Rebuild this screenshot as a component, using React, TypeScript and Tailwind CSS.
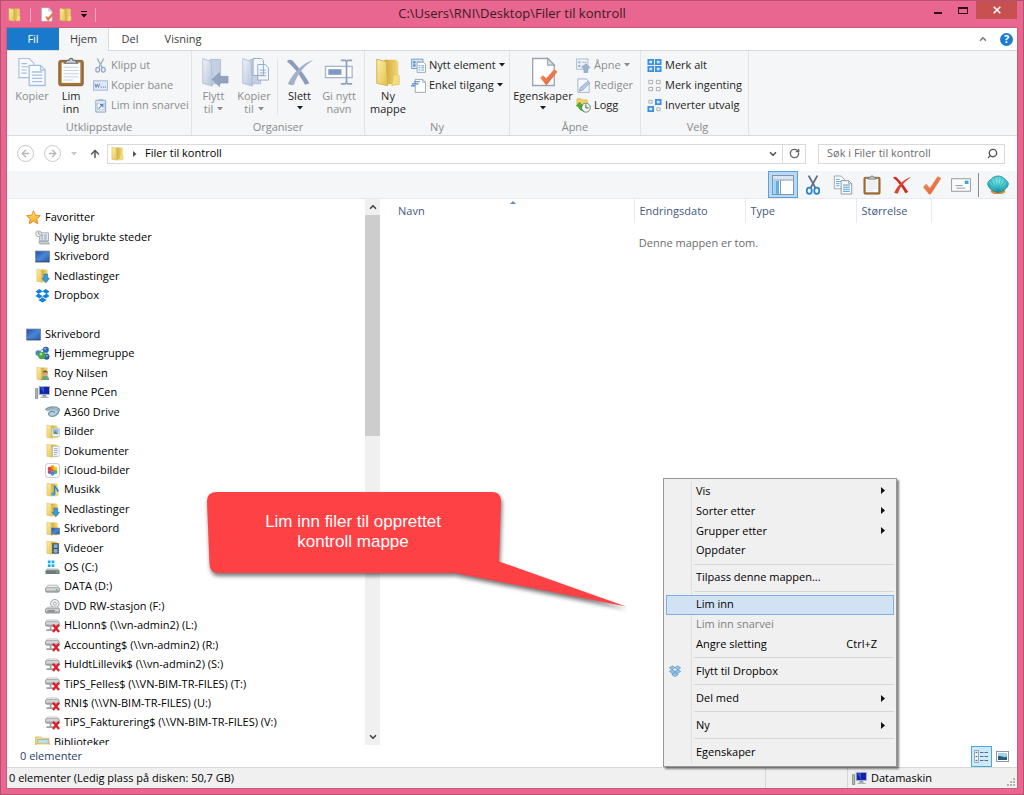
import React from "react";
import {
  ChevronDown,
  ChevronUp,
  RotateCw,
  ArrowUp,
  ArrowLeft,
  ArrowRight,
  Search,
} from "lucide-react";

type IconProps = { className?: string };
type IconType = React.FC<IconProps>;

/* ---------- shared gradients ---------- */

const Gradients = () => (
  <svg className="absolute h-0 w-0" aria-hidden="true">
    <defs>
      <linearGradient id="folderFront" x1="0" y1="0" x2="1" y2="1">
        <stop offset="0" stopColor="#fcf0ae" />
        <stop offset="1" stopColor="#e3c04a" />
      </linearGradient>
      <linearGradient id="folderBack" x1="0" y1="0" x2="1" y2="0">
        <stop offset="0" stopColor="#cfa737" />
        <stop offset="1" stopColor="#f1d977" />
      </linearGradient>
      <linearGradient id="fadedFront" x1="0" y1="0" x2="1" y2="1">
        <stop offset="0" stopColor="#eef2f8" />
        <stop offset="1" stopColor="#b5c3da" />
      </linearGradient>
      <linearGradient id="screenBlue" x1="0" y1="0" x2="1" y2="1">
        <stop offset="0" stopColor="#1f4fa8" />
        <stop offset="0.5" stopColor="#4a86d8" />
        <stop offset="1" stopColor="#2457ae" />
      </linearGradient>
      <linearGradient id="driveGrey" x1="0" y1="0" x2="0" y2="1">
        <stop offset="0" stopColor="#f4f4f4" />
        <stop offset="1" stopColor="#9da1a4" />
      </linearGradient>
      <linearGradient id="starGold" x1="0" y1="0" x2="0" y2="1">
        <stop offset="0" stopColor="#ffe873" />
        <stop offset="1" stopColor="#f7a51d" />
      </linearGradient>
      <linearGradient id="orangeTick" x1="0" y1="0" x2="1" y2="1">
        <stop offset="0" stopColor="#f79a6c" />
        <stop offset="1" stopColor="#e0562a" />
      </linearGradient>
      <radialGradient id="shellTeal" cx="0.5" cy="0.3" r="0.7">
        <stop offset="0" stopColor="#7ff0ea" />
        <stop offset="1" stopColor="#1a9fb0" />
      </radialGradient>
    </defs>
  </svg>
);

/* ---------- 16px icons ---------- */

const Svg16 = ({
  className = "h-4 w-4",
  children,
}: IconProps & { children: React.ReactNode }) => (
  <svg viewBox="0 0 16 16" className={`shrink-0 ${className}`} aria-hidden="true">
    {children}
  </svg>
);

const FolderShape = () => (
  <>
    <path d="M6 1.500h6l1.500 1v12H6z" fill="url(#folderBack)" />
    <path d="M11 9l3 1v4.500l-4 .8z" fill="#f4dd7d" stroke="#d9b94f" strokeWidth="0.3" />
    <path d="M2 1.200l5 1.300.8 12.800L2 14z" fill="url(#folderFront)" stroke="#d3b04a" strokeWidth="0.5" />
  </>
);

const FolderIcon: IconType = (p) => (
  <Svg16 {...p}>
    <FolderShape />
  </Svg16>
);

const StarIcon: IconType = (p) => (
  <Svg16 {...p}>
    <path d="M8 .8l2.1 4.8 5.2.5-3.9 3.4 1.2 5.2L8 12l-4.6 2.7 1.2-5.2L.7 6.100l5.200-.5z" fill="url(#starGold)" stroke="#df7d1c" strokeWidth="0.9" />
  </Svg16>
);

const RecentIcon: IconType = (p) => (
  <Svg16 {...p}>
    <path d="M5 3h9.500v8.500H5z" fill="#e4e9ee" stroke="#8b98a5" strokeWidth="0.8" />
    <path d="M6.500 5.500h2m1 0h3m-6 2h2m1 0h3m-6 2h2m1 0h3" stroke="#7a93ad" strokeWidth="0.9" />
    <path d="M4 12h9.500l2 3H5z" fill="#c3cad1" stroke="#8b98a5" strokeWidth="0.7" />
    <circle cx="3.800" cy="4" r="3" fill="#f5f5f5" stroke="#8b8b8b" strokeWidth="0.8" />
    <path d="M3.800 2.200V4l1.400.6" fill="none" stroke="#555" strokeWidth="0.7" />
  </Svg16>
);

const DesktopIcon: IconType = (p) => (
  <Svg16 {...p}>
    <rect x="0.700" y="2.200" width="14.800" height="11.800" fill="url(#screenBlue)" stroke="#6d7d92" strokeWidth="0.8" />
    <path d="M1 13.200h14" stroke="#3c4a5c" strokeWidth="0.8" />
  </Svg16>
);

const DownloadsIcon: IconType = (p) => (
  <Svg16 {...p}>
    <FolderShape />
    <path d="M9.500 6.500h4v4.500h2L11.500 15.700 7.500 11h2z" fill="#3d9bdc" stroke="#1f6ca8" strokeWidth="0.6" />
  </Svg16>
);

const DropboxShape = ({ fill = "#1081de", stroke = "none" }) => (
  <path
    d="M4.700 1L.5 3.700 3.500 6.100.5 8.500l4.200 2.700L8 8.700l3.300 2.500 4.200-2.700-3-2.400 3-2.400L11.300 1 8 3.500zM8 3.800l4 2.300-4 2.300-4-2.300zM4 11.700v1.300l4 2.500 4-2.500v-1.300l-.8.500L8 9.800l-3.200 2.400z"
    fill={fill}
    stroke={stroke}
    strokeWidth="0.6"
    fillRule="evenodd"
  />
);

const DropboxIcon: IconType = (p) => (
  <Svg16 {...p}>
    <DropboxShape />
  </Svg16>
);

const HomegroupIcon: IconType = (p) => (
  <Svg16 {...p}>
    <path d="M3 9l4-5 5-1 1 7-5 3z" fill="none" stroke="#6f9ed0" strokeWidth="1" />
    <circle cx="11.500" cy="4" r="3.300" fill="#2e68b8" />
    <circle cx="3.500" cy="7.500" r="3" fill="#4487cd" />
    <circle cx="12.300" cy="11.500" r="3.200" fill="#2a5cab" />
    <circle cx="7.300" cy="10" r="4" fill="#46a546" />
    <circle cx="6.300" cy="8.700" r="1.400" fill="#a7e295" />
    <circle cx="10.700" cy="3" r="1" fill="#9cc5ef" />
    <circle cx="12.700" cy="10.500" r="0.900" fill="#9cc5ef" />
  </Svg16>
);

const UserFolderIcon: IconType = (p) => (
  <Svg16 {...p}>
    <FolderShape />
    <path d="M7 15c0-3.500 1.500-4.500 3.700-4.500s4.300 1 4.300 4.500z" fill="#6aa87a" />
    <circle cx="11" cy="8" r="2.700" fill="#d7a77c" />
    <path d="M8.300 7.500c0-3.500 5.400-3.500 5.400 0l-1-.8H9.500z" fill="#5f5348" />
  </Svg16>
);

const ComputerIcon: IconType = (p) => (
  <Svg16 {...p}>
    <rect x="0.500" y="4" width="2.500" height="10.500" fill="#a5b8a0" stroke="#6b7a6b" strokeWidth="0.6" />
    <rect x="4.500" y="1.500" width="11" height="8.500" fill="#1422a8" stroke="#a9b3c2" />
    <path d="M5.500 2.500h4v6z" fill="#3b55e0" />
    <path d="M8.500 10.500h3l1 2h-5z" fill="#8e99a8" />
    <path d="M6 13.200h8.500" stroke="#aab3bf" strokeWidth="1.3" />
  </Svg16>
);

const A360Icon: IconType = (p) => (
  <Svg16 {...p}>
    <path d="M.5 6.500C3 3 11 1.500 15.500 5.500 14.500 12 9 14.500 5 12.500 3 11 3.600 8.700 6 8c2-.6 4.500 0 4 1.700" fill="#b9d0dc" stroke="#7598ab" strokeWidth="1.4" />
    <path d="M2 6.700c4-2.500 9-2.300 12 .3" stroke="#8fadbc" strokeWidth="1.6" fill="none" />
  </Svg16>
);

const PicturesIcon: IconType = (p) => (
  <Svg16 {...p}>
    <FolderShape />
    <rect x="7.500" y="4.500" width="8" height="9" fill="#eef3f7" stroke="#9fb0c0" strokeWidth="0.6" />
    <path d="M8.500 5.500h6v4h-6z" fill="#8dbbe0" />
    <path d="M8.500 10.500l2.500-3 3.500 3.500z" fill="#5c8f68" />
  </Svg16>
);

const DocumentsIcon: IconType = (p) => (
  <Svg16 {...p}>
    <FolderShape />
    <rect x="8" y="3.500" width="7" height="10.500" fill="#fafafa" stroke="#9fb0c0" strokeWidth="0.6" />
    <path d="M9.500 6h4m-4 2h4m-4 2h4m-4 2h3" stroke="#7b94b5" strokeWidth="0.8" />
  </Svg16>
);

const CloudPhotosIcon: IconType = (p) => (
  <Svg16 {...p}>
    <rect x="0.500" y="0.500" width="15" height="15" rx="3" fill="#fff" stroke="#b8b8b8" strokeWidth="0.8" />
    <circle cx="8" cy="4.600" r="2.200" fill="#f7941d" />
    <circle cx="11" cy="6.300" r="2.200" fill="#e5cf1b" />
    <circle cx="11" cy="9.600" r="2.200" fill="#48b15a" />
    <circle cx="8" cy="11.300" r="2.200" fill="#3c8fd4" />
    <circle cx="5" cy="9.600" r="2.200" fill="#8b59b0" />
    <circle cx="5" cy="6.300" r="2.200" fill="#e4413c" />
    <circle cx="8" cy="8" r="1.500" fill="#e84a2e" />
  </Svg16>
);

const MusicIcon: IconType = (p) => (
  <Svg16 {...p}>
    <FolderShape />
    <path d="M10 4c.8 2.500 4.500 2.600 3.500 6.500" fill="none" stroke="#2785cb" strokeWidth="1.7" />
    <path d="M10.200 4v8.500" stroke="#2785cb" strokeWidth="1.5" />
    <ellipse cx="9" cy="12.800" rx="2.300" ry="1.900" fill="#3f9ee0" />
  </Svg16>
);

const DesktopFolderIcon: IconType = (p) => (
  <Svg16 {...p}>
    <FolderShape />
    <rect x="7" y="7.500" width="8.500" height="6.500" fill="url(#screenBlue)" stroke="#5d6c80" strokeWidth="0.6" />
  </Svg16>
);

const VideosIcon: IconType = (p) => (
  <Svg16 {...p}>
    <FolderShape />
    <rect x="7.500" y="3.500" width="7.500" height="11" fill="#3b444d" />
    <path d="M9.300 4.500h4v4h-4zm0 5h4v4h-4z" fill="#7fb2dc" />
    <path d="M8.400 4v10.500M14.200 4v10.500" stroke="#cfd6db" strokeWidth="0.7" strokeDasharray="1 1" />
  </Svg16>
);

const OsDriveIcon: IconType = (p) => (
  <Svg16 {...p}>
    <path d="M3 .5h3v3H3zm4 0h3v3H7zM3 4.500h3v3H3zm4 0h3v3H7z" fill="#15b2e8" />
    <path d="M2 9h12l1.500 2.500H.5z" fill="#b9bec1" />
    <rect x="0.500" y="11" width="15" height="4" rx="1" fill="#6f7a80" />
    <rect x="11.500" y="12.300" width="2.500" height="1.200" fill="#5be06b" />
  </Svg16>
);

const DriveIcon: IconType = (p) => (
  <Svg16 {...p}>
    <path d="M3 6.500h10l2.500 3.500H.5z" fill="#e6e8e9" stroke="#9a9ea1" strokeWidth="0.6" />
    <rect x="0.500" y="9.500" width="15" height="4.500" rx="1.500" fill="url(#driveGrey)" stroke="#777c80" strokeWidth="0.7" />
    <rect x="11.500" y="11" width="2" height="1.300" fill="#4fae55" />
  </Svg16>
);

const DvdIcon: IconType = (p) => (
  <Svg16 {...p}>
    <circle cx="10.500" cy="5" r="4.500" fill="#edf0f2" stroke="#85898c" strokeWidth="0.8" />
    <circle cx="10.500" cy="5" r="1.600" fill="#fff" stroke="#85898c" strokeWidth="0.7" />
    <path d="M3 8.500h11l1.500 2.500H.5z" fill="#d9dcde" stroke="#8d9194" strokeWidth="0.5" />
    <rect x="0.500" y="10.500" width="15" height="4.500" rx="1" fill="url(#driveGrey)" stroke="#6d7275" strokeWidth="0.7" />
    <path d="M2.500 12.700h8" stroke="#53585b" />
  </Svg16>
);

const NetworkDriveIcon: IconType = (p) => (
  <Svg16 {...p}>
    <path d="M2.500 2h10.500l2 2.500H.7z" fill="#eceeef" stroke="#9a9ea1" strokeWidth="0.5" />
    <rect x="0.500" y="4" width="14.700" height="4.700" rx="1.500" fill="url(#driveGrey)" stroke="#777c80" strokeWidth="0.7" />
    <path d="M6 8.500v4M1.500 13h8" stroke="#9ba1a5" strokeWidth="1.8" />
    <path d="M8.500 7.300l6.500 7.700M15 7.300L8.500 15" stroke="#de1f29" strokeWidth="2.500" />
  </Svg16>
);

const LibrariesIcon: IconType = (p) => (
  <Svg16 {...p}>
    <path d="M.5 2h6l1 1.500H15v10.500H.5z" fill="#f1dc83" stroke="#c9a945" strokeWidth="0.6" />
    <rect x="3" y="5" width="11" height="6" fill="#bcdff0" stroke="#6fa8c5" strokeWidth="0.6" />
    <path d="M1 9h14.500v6H1z" fill="#f7e9a6" stroke="#c9a945" strokeWidth="0.6" />
  </Svg16>
);

const PropertiesShape = () => (
  <>
    <path d="M2.500.8h8L14 4.300v10.900H2.500z" fill="#fff" stroke="#9aa4ae" strokeWidth="0.7" />
    <path d="M10.500.8v3.500H14z" fill="#dfe5ea" stroke="#9aa4ae" strokeWidth="0.6" />
    <path d="M6.500 11l1.500-1.300 1.700 1.600L14 6.500l1.700 1.300-5.900 7.400z" fill="url(#orangeTick)" />
  </>
);

const PropertiesIcon: IconType = (p) => (
  <Svg16 {...p}>
    <PropertiesShape />
  </Svg16>
);

const PagesShape = ({ edge = "#a9bfdd", lines = "#a9bfdd" }) => (
  <>
    <path d="M1 .8h5.500L9 3.300V11H1z" fill="#f7fafe" stroke={edge} strokeWidth="0.6" />
    <path d="M2.300 3.500h3m-3 1.700h4m-4 1.700h3m-3 1.700h3" stroke={lines} strokeWidth="0.6" />
    <path d="M6.500 4.500h6L15 7v8.200H6.500z" fill="#f7fafe" stroke={edge} strokeWidth="0.7" />
    <path d="M12.500 4.500V7H15" fill="none" stroke={edge} strokeWidth="0.6" />
    <path d="M8 8h5.500M8 9.700h5.500M8 11.400h5.500M8 13.100h5.500" stroke={lines} strokeWidth="0.7" />
  </>
);

const ClipboardShape = () => (
  <>
    <rect x="1.500" y="1.800" width="13" height="13.500" rx="1" fill="#a47338" stroke="#80592a" strokeWidth="0.5" />
    <rect x="3" y="3" width="10" height="10.800" fill="#fbfcfd" />
    <path d="M4 5.500h8M4 7.200h8M4 8.900h8M4 10.600h8M4 12.300h5" stroke="#c5d2e0" strokeWidth="0.5" />
    <path d="M4.500 3.300l1.500-1.600h1a1 1 0 0 1 2 0h1l1.500 1.600z" fill="#c9ced3" stroke="#656c73" strokeWidth="0.6" />
  </>
);

const ScissorsShape = ({ blade, handle }: { blade: string; handle: string }) => (
  <>
    <path d="M4.500.5l5.500 10M11.500.5L6 10.500" stroke={blade} strokeWidth="1.5" fill="none" />
    <ellipse cx="5" cy="12.500" rx="2" ry="2.500" fill="none" stroke={handle} strokeWidth="1.4" />
    <ellipse cx="11" cy="12.500" rx="2" ry="2.500" fill="none" stroke={handle} strokeWidth="1.4" />
  </>
);

const CutFadedIcon: IconType = (p) => (
  <Svg16 {...p}>
    <ScissorsShape blade="#a3afc2" handle="#94a8c8" />
  </Svg16>
);

const CopyPathIcon: IconType = (p) => (
  <Svg16 {...p}>
    <rect x="0.500" y="3" width="15" height="10" fill="#dfe8f4" stroke="#9db2d0" strokeWidth="0.9" />
    <path d="M2 6l1.200 4L4.500 6.500 5.800 10 7 6" fill="none" stroke="#5d7eae" strokeWidth="0.9" />
    <path d="M8 9.700h1.500m1 0H12m1 0h1" stroke="#5d7eae" />
  </Svg16>
);

const PasteShortcutIcon: IconType = (p) => (
  <Svg16 {...p}>
    <path d="M3 2.500h10.500v12.500H3z" fill="#e3ebf5" stroke="#89a0c4" />
    <path d="M6 1.200h4.500v2H6z" fill="#9db1d0" />
    <rect x="4.800" y="5.500" width="7" height="7" fill="#fff" stroke="#9db2d0" strokeWidth="0.6" />
    <path d="M6 11.300l4-4M7.300 7h3.200v3.200" stroke="#5d82bb" strokeWidth="1.2" fill="none" />
  </Svg16>
);

const NewItemIcon: IconType = (p) => (
  <Svg16 {...p}>
    <rect x="0.700" y="1.200" width="12" height="10" fill="#dcebf8" stroke="#6793bd" strokeWidth="0.9" />
    <path d="M2.500 3.500h2v2h-2zm0 3.500h2v2h-2zM6 4h5" fill="#5d91c7" stroke="#5d91c7" strokeWidth="0.6" />
    <path d="M6.500 4.500h7l2 2v8.800h-9z" fill="#fff" stroke="#7e92a8" strokeWidth="0.8" />
    <path d="M8 8.200h2m1 0h3m-6 2.300h2m1 0h3m-6 2.300h2m1 0h3" stroke="#6e9bc5" strokeWidth="1.1" />
  </Svg16>
);

const EasyAccessIcon: IconType = (p) => (
  <Svg16 {...p}>
    <path d="M4.500 1.500h8l3 3v10.800h-11z" fill="#fff" stroke="#7e92a8" strokeWidth="0.8" />
    <path d="M12.500 1.500v3h3" fill="none" stroke="#7e92a8" strokeWidth="0.7" />
    <path d="M3 4h6.500M1 6.200h7M0 8.400h4.500" stroke="#4a86c8" strokeWidth="1.2" />
  </Svg16>
);

const OpenIcon: IconType = (p) => (
  <Svg16 {...p}>
    <rect x="0.700" y="1" width="12" height="11" fill="#eef3fa" stroke="#a4b4cb" strokeWidth="0.9" />
    <path d="M2.500 3.500h2v2h-2zm0 4h2v2h-2z" fill="#89a7d0" />
    <path d="M6 4.500h5M6 8.500h2" stroke="#a4b4cb" />
    <path d="M10.500 6l4.500 4.500h-2.500v5h-4v-5H6z" fill="#9eb4d1" stroke="#7c94b8" strokeWidth="0.6" />
  </Svg16>
);

const EditIcon: IconType = (p) => (
  <Svg16 {...p}>
    <path d="M2 1h9l3 3v11.300H2z" fill="#f4f8fd" stroke="#94a8c5" strokeWidth="0.9" />
    <path d="M3.500 14l1-3.500 8-7 2 2-7.500 7.500z" fill="#b9cbe4" stroke="#7e9ac2" strokeWidth="0.8" />
  </Svg16>
);

const HistoryIcon: IconType = (p) => (
  <Svg16 {...p}>
    <path d="M1 .8h4.500l1 1.200H12v7H1z" fill="#f2d561" stroke="#c8a537" strokeWidth="0.6" />
    <circle cx="10.500" cy="10.300" r="4.800" fill="#eef7f0" stroke="#65736a" strokeWidth="0.9" />
    <path d="M10.500 6.800v3.800h3" fill="none" stroke="#4a5a52" />
    <path d="M.5 8.500l3.300-4 3.500 4H5.500c0 2.500 1 4 2.500 5.500-3-.5-5.200-2.500-5.500-5.500z" fill="#46b13c" stroke="#23801e" strokeWidth="0.5" />
  </Svg16>
);

const SelectAllIcon: IconType = (p) => (
  <Svg16 {...p}>
    <path d="M.5 1h7v6.500h-7zm8 0h7v6.500h-7zm-8 7.500h7V15h-7zm8 0h7V15h-7z" fill="#3c8fe4" />
    <path d="M2.500 3h3v2.500h-3zm8 0h3v2.500h-3zm-8 7.500h3V13h-3zm8 0h3V13h-3z" fill="#d7eafb" />
  </Svg16>
);

const SelectNoneIcon: IconType = (p) => (
  <Svg16 {...p}>
    <path d="M2 2.500h4v3.500H2zm8 0h4v3.500h-4zM2 10h4v3.500H2zm8 0h4v3.500h-4z" fill="#fff" stroke="#9b9b9b" strokeWidth="0.9" />
  </Svg16>
);

const InvertIcon: IconType = (p) => (
  <Svg16 {...p}>
    <path d="M8.500 1h7v6.500h-7zm-8 7.500h7V15h-7z" fill="#3c8fe4" />
    <path d="M10.500 3h3v2.500h-3zm-8 7.500h3V13h-3z" fill="#d7eafb" />
    <path d="M2 2.500h3.500v3H2zm8.500 8H14v3h-3.500z" fill="#fff" stroke="#9b9b9b" strokeWidth="0.9" />
  </Svg16>
);

/* ---------- large ribbon icons ---------- */

const Svg32 = ({ children }: { children: React.ReactNode }) => (
  <svg viewBox="0 0 16 16" className="h-[30px] w-[30px] shrink-0" aria-hidden="true">
    {children}
  </svg>
);

const FadedFolder = () => (
  <>
    <path d="M6 1.300h5.500v13H6z" fill="#c3cfe2" stroke="#a9b8d0" strokeWidth="0.4" />
    <path d="M2 .8l4.300 1.500.9 13.200L2 14z" fill="url(#fadedFront)" stroke="#a9b8d0" strokeWidth="0.4" />
  </>
);

const BigCopy = () => (
  <Svg32>
    <PagesShape />
  </Svg32>
);
const BigPaste = () => (
  <Svg32>
    <ClipboardShape />
  </Svg32>
);
const BigMoveTo = () => (
  <Svg32>
    <FadedFolder />
    <path d="M7 12l4-3.700v2h4.500v3.600H11v2z" fill="#93a4bf" stroke="#7c8fae" strokeWidth="0.3" />
  </Svg32>
);
const BigCopyTo = () => (
  <Svg32>
    <FadedFolder />
    <path d="M7.500.8h4.500l1 1v8H7.500zM10 4h4l1.700 1.700v6.600H10z" fill="#f4f8fd" stroke="#92a8c8" strokeWidth="0.5" />
    <path d="M11 7h3.500M11 8.500h3.500M11 10h3.500" stroke="#92a8c8" strokeWidth="0.5" />
  </Svg32>
);
const BigDelete = () => (
  <Svg32>
    <path d="M1 2.200c1-1 2.500-.9 3.300.1 3.500 4 6 7 8.700 11.700l-2.300.8C8.500 10.500 5 5.500 1 2.200z" fill="#8b9db8" />
    <path d="M15.300 1.500C10.500 4.500 6.500 9 4.800 14.800c-1.200.4-2.300.2-3.300-.5C4 9 9.500 3 15.300 1.500z" fill="#a2b2ca" />
  </Svg32>
);
const BigRename = () => (
  <Svg32>
    <rect x="0.800" y="5" width="14.200" height="6" fill="#fff" stroke="#a7b6cc" strokeWidth="0.7" />
    <rect x="2.300" y="6.500" width="7" height="3" fill="#7e9ac4" />
    <path d="M9 1.800h2.300l.7.600.7-.6H15M12 2.300v11.400M9 14.300h2.300l.7-.6.7.6H15" fill="none" stroke="#8da0be" strokeWidth="0.9" />
  </Svg32>
);
const BigFolder = () => (
  <Svg32>
    <FolderShape />
  </Svg32>
);
const BigProperties = () => (
  <Svg32>
    <PropertiesShape />
  </Svg32>
);

/* ---------- ribbon ---------- */

const Caret = ({ className = "" }: IconProps) => (
  <svg viewBox="0 0 6 4" className={`h-1 w-1.5 shrink-0 fill-current ${className}`} aria-hidden="true">
    <path d="M0 0h6L3 3.500z" />
  </svg>
);

type BigButtonProps = {
  icon: React.ReactNode;
  lines: string[];
  caret?: "inline" | "below";
  disabled?: boolean;
  className: string;
};

const BigButton = ({ icon, lines, caret, disabled, className }: BigButtonProps) => (
  <button
    type="button"
    disabled={disabled}
    className={`flex flex-col items-center pt-1.5 leading-[13px] ${disabled ? "text-[#8d8d8d]" : "text-[#1e1e1e]"} ${className}`}
  >
    {icon}
    <span className="mt-0.5 whitespace-nowrap">{lines[0]}</span>
    {lines[1] && (
      <span className="flex items-center gap-1 whitespace-nowrap">
        {lines[1]}
        {caret === "inline" && <Caret />}
      </span>
    )}
    {caret === "below" && <Caret className="mt-1" />}
  </button>
);

type SmallButtonProps = {
  Icon: IconType;
  label: string;
  caret?: boolean;
  disabled?: boolean;
};

const SmallButton = ({ Icon, label, caret, disabled }: SmallButtonProps) => (
  <button
    type="button"
    disabled={disabled}
    className={`flex h-5 items-center gap-[3px] whitespace-nowrap ${disabled ? "text-[#8d8d8d]" : "text-[#1e1e1e]"}`}
  >
    <Icon className="h-[15px] w-[15px]" />
    {label}
    {caret && <Caret />}
  </button>
);

const Group = ({
  label,
  className,
  children,
}: {
  label: string;
  className: string;
  children: React.ReactNode;
}) => (
  <section className={`flex shrink-0 flex-col border-r border-[#e2e3e4] ${className}`}>
    <div className="flex flex-1">{children}</div>
    <h2 className="text-center leading-4 text-[#8a8a8a]">{label}</h2>
  </section>
);

const SmallStack = ({ children }: { children: React.ReactNode }) => (
  <div className="flex flex-col pt-1">{children}</div>
);

const Ribbon = () => (
  <div className="flex h-[85px] shrink-0 overflow-hidden border-b border-[#d9dadb] bg-[#f5f6f7]">
    <Group label="Utklippstavle" className="w-[185px]">
      <BigButton icon={<BigCopy />} lines={["Kopier"]} disabled className="w-[50px]" />
      <BigButton icon={<BigPaste />} lines={["Lim", "inn"]} className="mr-2 w-[28px]" />
      <SmallStack>
        <SmallButton Icon={CutFadedIcon} label="Klipp ut" disabled />
        <SmallButton Icon={CopyPathIcon} label="Kopier bane" disabled />
        <SmallButton Icon={PasteShortcutIcon} label="Lim inn snarvei" disabled />
      </SmallStack>
    </Group>
    <Group label="Organiser" className="w-[173px]">
      <BigButton icon={<BigMoveTo />} lines={["Flytt", "til"]} caret="inline" disabled className="w-[43px]" />
      <BigButton icon={<BigCopyTo />} lines={["Kopier", "til"]} caret="inline" disabled className="w-[38px]" />
      <div className="mt-2 mb-1 ml-1 w-px bg-[#e2e3e4]" />
      <BigButton icon={<BigDelete />} lines={["Slett"]} caret="below" className="w-[43px]" />
      <BigButton icon={<BigRename />} lines={["Gi nytt", "navn"]} disabled className="w-[36px]" />
    </Group>
    <Group label="Ny" className="w-[145px]">
      <BigButton icon={<BigFolder />} lines={["Ny", "mappe"]} className="w-[46px]" />
      <SmallStack>
        <SmallButton Icon={NewItemIcon} label="Nytt element" caret />
        <SmallButton Icon={EasyAccessIcon} label="Enkel tilgang" caret />
      </SmallStack>
    </Group>
    <Group label="Åpne" className="w-[131px]">
      <BigButton icon={<BigProperties />} lines={["Egenskaper"]} caret="below" className="w-[66px]" />
      <SmallStack>
        <SmallButton Icon={OpenIcon} label="Åpne" caret disabled />
        <SmallButton Icon={EditIcon} label="Rediger" disabled />
        <SmallButton Icon={HistoryIcon} label="Logg" />
      </SmallStack>
    </Group>
    <Group label="Velg" className="w-[108px] pl-1.5">
      <SmallStack>
        <SmallButton Icon={SelectAllIcon} label="Merk alt" />
        <SmallButton Icon={SelectNoneIcon} label="Merk ingenting" />
        <SmallButton Icon={InvertIcon} label="Inverter utvalg" />
      </SmallStack>
    </Group>
  </div>
);

/* ---------- title, tabs, address, toolbar ---------- */

const TitleBar = () => (
  <header className="relative flex h-[26px] shrink-0 items-center justify-center">
    <div className="absolute top-1.5 left-px flex items-center">
      <FolderIcon className="h-[15px] w-[15px]" />
      <span className="ml-2 h-3.5 w-px bg-[#f3a9c0]" />
      <button type="button" aria-label="Egenskaper" className="ml-2">
        <PropertiesIcon className="h-[15px] w-[15px]" />
      </button>
      <button type="button" aria-label="Ny mappe" className="ml-1">
        <FolderIcon className="h-[15px] w-[15px]" />
      </button>
      <button type="button" aria-label="Tilpass" className="ml-2 flex flex-col items-center gap-0.5 text-black">
        <span className="h-px w-1.5 bg-black" />
        <Caret />
      </button>
      <span className="ml-2 h-3.5 w-px bg-[#f3a9c0]" />
    </div>
    <h1 className="text-[13px] text-[#3c1a26]">C:\Users\RNI\Desktop\Filer til kontroll</h1>
    <div className="absolute top-0 right-px flex h-[18px] items-center">
      <button type="button" aria-label="Minimer" className="flex h-full w-[25px] items-center justify-center pt-1.5">
        <span className="h-0.5 w-2 bg-[#2c0f1a]" />
      </button>
      <button type="button" aria-label="Maksimer" className="flex h-full w-[26px] items-center justify-center">
        <span className="h-[7px] w-[10px] border border-t-2 border-[#2c0f1a]" />
      </button>
      <button type="button" aria-label="Lukk" className="flex h-full w-[41px] items-center justify-center bg-[#c75050]">
        <svg viewBox="0 0 8 8" className="h-2 w-2" aria-hidden="true">
          <path d="M.7.7l6.600 6.600M7.300.7L.7 7.300" stroke="#fff" strokeWidth="1.6" />
        </svg>
      </button>
    </div>
  </header>
);

const Tabs = () => (
  <nav className="flex h-[23px] shrink-0 items-stretch border-b border-[#d9dadb] bg-white text-[#3b3b3b]">
    <button type="button" className="w-[52px] bg-[#1979ca] text-white">Fil</button>
    <button type="button" className="-mb-px w-[50px] border-r border-[#d9dadb] bg-[#f5f6f7]">Hjem</button>
    <button type="button" className="w-[42px]">Del</button>
    <button type="button" className="w-[64px]">Visning</button>
    <div className="ml-auto flex items-center gap-3 pr-1">
      <button type="button" aria-label="Minimer båndet">
        <ChevronUp className="h-2.5 w-2.5 text-[#7d7d7d]" strokeWidth={4} />
      </button>
      <button type="button" aria-label="Hjelp" className="flex h-[13px] w-[13px] items-center justify-center rounded-full bg-[#1f7bd0] font-bold text-white">
        ?
      </button>
    </div>
  </nav>
);

const AddressBar = () => (
  <div className="flex h-[35px] shrink-0 items-center bg-white pr-3 pl-2.5">
    <button type="button" aria-label="Tilbake" className="flex h-[17px] w-[17px] items-center justify-center rounded-full border border-[#c8c8c8] text-[#b9b9b9]">
      <ArrowLeft className="h-[11px] w-[11px]" strokeWidth={3} />
    </button>
    <button type="button" aria-label="Fremover" className="ml-2.5 flex h-[17px] w-[17px] items-center justify-center rounded-full border border-[#c8c8c8] text-[#b9b9b9]">
      <ArrowRight className="h-[11px] w-[11px]" strokeWidth={3} />
    </button>
    <button type="button" aria-label="Nylige plasseringer" className="ml-2.5 text-[#c8c8c8]">
      <Caret />
    </button>
    <button type="button" aria-label="Opp" className="mr-1.5 ml-3 text-[#555]">
      <ArrowUp className="h-3 w-3" strokeWidth={3} />
    </button>
    <div className="flex h-5 flex-1 items-center border border-[#d9d9d9] pl-0.5">
      <FolderIcon className="h-[15px] w-[15px]" />
      <svg viewBox="0 0 4 6" className="ml-2 h-1.5 w-1" aria-hidden="true">
        <path d="M0 0l3.500 3L0 6z" fill="#555" />
      </svg>
      <span className="ml-2 flex-1 text-black">Filer til kontroll</span>
      <button type="button" aria-label="Tidligere plasseringer" className="flex w-[18px] justify-center text-[#555]">
        <ChevronDown className="h-2.5 w-2.5" strokeWidth={4} />
      </button>
      <button type="button" aria-label="Oppdater" className="flex h-full w-[23px] items-center justify-center border-l border-[#d9d9d9] text-[#666]">
        <RotateCw className="h-[11px] w-[11px]" strokeWidth={3} />
      </button>
    </div>
    <label className="ml-3 flex h-5 w-[187px] items-center border border-[#d9d9d9] pr-1.5 pl-2">
      <input
        type="text"
        aria-label="Søk"
        placeholder="Søk i Filer til kontroll"
        className="min-w-0 flex-1 bg-transparent outline-none placeholder:text-[#6d6d6d]"
      />
      <Search className="h-[11px] w-[11px] -scale-x-100 text-[#555]" strokeWidth={3} />
    </label>
  </div>
);

const tools: { label: string; art: React.ReactNode }[] = [
  { label: "Klipp ut", art: <ScissorsShape blade="#5c7187" handle="#2585cf" /> },
  { label: "Kopier", art: <PagesShape edge="#8d8d8d" lines="#3a93dc" /> },
  { label: "Lim inn", art: <ClipboardShape /> },
  {
    label: "Slett",
    art: (
      <>
        <path d="M.8 2c1-.9 2.300-.8 3 0 3.500 3.700 6 6.500 9.200 11.500l-2.300 1C8.500 10.500 5 5.300.8 2z" fill="#d0291f" />
        <path d="M15.500 1.500C10.500 4.500 6.500 9 4.800 14.500c-1.200.4-2 .2-3-.5C4 9 9.500 2.700 15.500 1.500z" fill="#e0402f" />
      </>
    ),
  },
  {
    label: "Egenskaper",
    art: <path d="M.8 9.500L3.300 7l3 3.300L12.500 1l2.800 1.500L7 15.300H5.500z" fill="url(#orangeTick)" />,
  },
  {
    label: "E-post",
    art: (
      <>
        <rect x="0.500" y="3" width="15" height="10" fill="#fbfbfb" stroke="#8f8f8f" strokeWidth="0.7" />
        <rect x="11" y="4.500" width="3" height="2.700" fill="#3ba9cf" />
        <path d="M3.500 8.500h6M4.500 10.500h7" stroke="#8a9299" strokeWidth="0.7" />
      </>
    ),
  },
];

const Toolbar = () => (
  <div className="flex h-[28px] shrink-0 items-center justify-end border-b border-[#e9eaeb] bg-[#f5f6f7] pr-[5px]">
    <button type="button" aria-label="Navigasjonsrute" className="flex h-[27px] w-[30px] items-center justify-center border border-[#5aa0e0] bg-[#b8d8f6]">
      <svg viewBox="0 0 22 20" className="h-5 w-[22px]" aria-hidden="true">
        <rect x="0.500" y="0.500" width="21" height="19" fill="#fff" stroke="#7f97ad" />
        <path d="M1 1h20v3.500H1z" fill="#d9e6f2" />
        <path d="M1 5h20M8.500 5v14.500" stroke="#7f97ad" />
        <path d="M1.500 6H7v13H1.500z" fill="#5eaeea" />
        <path d="M3 6v13" stroke="#a4d2f5" strokeWidth="2" />
      </svg>
    </button>
    <div className="flex w-[178px]">
      {tools.map((tool) => (
        <button key={tool.label} type="button" aria-label={tool.label} className="flex flex-1 justify-center">
          <Svg16 className="h-5 w-5">{tool.art}</Svg16>
        </button>
      ))}
    </div>
    <span className="mr-1 ml-0.5 h-6 w-px bg-[#8c8c8c]" />
    <button type="button" aria-label="Classic Shell" className="flex w-[29px] justify-center">
      <svg viewBox="0 0 22 20" className="h-5 w-[22px]" aria-hidden="true">
        <path d="M5 14l-1.500 3L7 19h8l3.500-2L17 14z" fill="#d98b3e" />
        <path d="M11 17.500C7 17 .8 13.500.6 8.500 1.500 6 3 5 4 4.200 6 2 8.500 1 11 1s5 1 7 3.200c1 .8 2.500 1.800 3.400 4.300-.2 5-6.400 8.500-10.400 9z" fill="url(#shellTeal)" stroke="#127e90" strokeWidth="0.7" />
        <path d="M11 17L11 1.500M11 17L7 2M11 17L15 2M11 17L3.500 5M11 17l7.500-12M11 17L1.500 9M11 17l9.500-8" stroke="#15899a" strokeWidth="0.4" />
      </svg>
    </button>
  </div>
);

/* ---------- navigation pane ---------- */

type TreeItem = { label: string; depth: 0 | 1 | 2; Icon: IconType } | null;

const tree: TreeItem[] = [
  { label: "Favoritter", depth: 0, Icon: StarIcon },
  { label: "Nylig brukte steder", depth: 1, Icon: RecentIcon },
  { label: "Skrivebord", depth: 1, Icon: DesktopIcon },
  { label: "Nedlastinger", depth: 1, Icon: DownloadsIcon },
  { label: "Dropbox", depth: 1, Icon: DropboxIcon },
  null,
  { label: "Skrivebord", depth: 0, Icon: DesktopIcon },
  { label: "Hjemmegruppe", depth: 1, Icon: HomegroupIcon },
  { label: "Roy Nilsen", depth: 1, Icon: UserFolderIcon },
  { label: "Denne PCen", depth: 1, Icon: ComputerIcon },
  { label: "A360 Drive", depth: 2, Icon: A360Icon },
  { label: "Bilder", depth: 2, Icon: PicturesIcon },
  { label: "Dokumenter", depth: 2, Icon: DocumentsIcon },
  { label: "iCloud-bilder", depth: 2, Icon: CloudPhotosIcon },
  { label: "Musikk", depth: 2, Icon: MusicIcon },
  { label: "Nedlastinger", depth: 2, Icon: DownloadsIcon },
  { label: "Skrivebord", depth: 2, Icon: DesktopFolderIcon },
  { label: "Videoer", depth: 2, Icon: VideosIcon },
  { label: "OS (C:)", depth: 2, Icon: OsDriveIcon },
  { label: "DATA (D:)", depth: 2, Icon: DriveIcon },
  { label: "DVD RW-stasjon (F:)", depth: 2, Icon: DvdIcon },
  { label: "HLlonn$ (\\\\vn-admin2) (L:)", depth: 2, Icon: NetworkDriveIcon },
  { label: "Accounting$ (\\\\vn-admin2) (R:)", depth: 2, Icon: NetworkDriveIcon },
  { label: "HuldtLillevik$ (\\\\vn-admin2) (S:)", depth: 2, Icon: NetworkDriveIcon },
  { label: "TiPS_Felles$ (\\\\VN-BIM-TR-FILES) (T:)", depth: 2, Icon: NetworkDriveIcon },
  { label: "RNI$ (\\\\VN-BIM-TR-FILES) (U:)", depth: 2, Icon: NetworkDriveIcon },
  { label: "TiPS_Fakturering$ (\\\\VN-BIM-TR-FILES) (V:)", depth: 2, Icon: NetworkDriveIcon },
  { label: "Biblioteker", depth: 1, Icon: LibrariesIcon },
];

const indents = ["pl-[19px]", "pl-7", "pl-[38px]"];

const NavigationPane = () => (
  <div className="flex w-[373px] shrink-0 overflow-hidden">
    <ul className="flex h-[calc(100%+7px)] flex-1 flex-col pt-[9px]">
      {tree.map((item, i) => (
        <li key={i} className="flex min-h-[19px] flex-1 items-center">
          {item && (
            <a href="#" className={`flex items-center gap-1 whitespace-nowrap text-black ${indents[item.depth]}`}>
              <item.Icon className="h-[15px] w-[15px]" />
              {item.label}
            </a>
          )}
        </li>
      ))}
    </ul>
    <div className="flex w-[15px] flex-col items-center bg-[#f0f0f0]">
      <button type="button" aria-label="Rull opp" className="flex h-4 items-center">
        <ChevronUp className="h-2.5 w-2.5 text-[#444]" strokeWidth={4} />
      </button>
      <div className="h-[221px] w-full bg-[#cdcdcd]" />
      <button type="button" aria-label="Rull ned" className="mt-auto flex h-4 items-center">
        <ChevronDown className="h-2.5 w-2.5 text-[#444]" strokeWidth={4} />
      </button>
    </div>
  </div>
);

/* ---------- file list ---------- */

const FileList = () => (
  <div className="min-w-0 flex-1">
    <table className="w-full table-fixed border-collapse">
      <thead>
        <tr className="h-6 text-left text-[#44597e]">
          <th className="relative w-[254px] pl-[18px] font-normal">
            Navn
            <svg viewBox="0 0 6 3" className="absolute top-0.5 left-[130px] h-[3px] w-1.5" aria-hidden="true">
              <path d="M0 3l3-3 3 3z" fill="#5c8fc0" />
            </svg>
          </th>
          <th className="w-[111px] border-x border-[#e5ebf3] pl-[5px] font-normal">Endringsdato</th>
          <th className="w-[111px] border-r border-[#e5ebf3] pl-[5px] font-normal">Type</th>
          <th className="w-[75px] border-r border-[#e5ebf3] pl-[5px] font-normal">Størrelse</th>
          <td />
        </tr>
      </thead>
      <tbody>
        <tr>
          <td colSpan={5} className="pt-3 text-center text-[#6d6d6d]">Denne mappen er tom.</td>
        </tr>
      </tbody>
    </table>
  </div>
);

/* ---------- status ---------- */

const DetailsBar = () => (
  <div className="flex h-[22px] shrink-0 items-center bg-white pr-2 pl-[13px] text-[#26406e]">
    0 elementer
    <button type="button" aria-label="Detaljer" className="ml-auto flex h-[21px] w-[21px] items-center justify-center border border-[#4aa7d8] bg-[#cdeafa]">
      <svg viewBox="0 0 15 13" className="h-[13px] w-[15px]" aria-hidden="true">
        <path d="M.5.5h4v12h-4z" fill="#fff" stroke="#7b8a96" strokeWidth="0.7" />
        <path d="M1.500 2.500h2m-2 4h2m-2 4h2" stroke="#4f7fa5" strokeWidth="1.3" />
        <path d="M6 2.500h3.500m1 0H14M6 6.500h3.500m1 0H14M6 10.500h3.500m1 0H14" stroke="#5d6f7d" strokeWidth="1.2" />
      </svg>
    </button>
    <button type="button" aria-label="Store ikoner" className="ml-1">
      <svg viewBox="0 0 13 11" className="h-[11px] w-[13px]" aria-hidden="true">
        <rect x="0.500" y="0.500" width="12" height="10" fill="#fff" stroke="#8d9aa5" />
        <path d="M2 2h9v7H2z" fill="#9ed3ef" />
        <path d="M2 5.500c3-1.500 5 2 9 0V9H2z" fill="#2c5a74" />
      </svg>
    </button>
  </div>
);

const StatusBar = () => (
  <footer className="flex h-[21px] shrink-0 items-stretch border-t border-[#d7d7d7] bg-[#f0f0f0] text-black">
    <span className="flex flex-1 items-center pl-0.5">0 elementer (Ledig plass på disken: 50,7 GB)</span>
    <span className="w-[82px] border-l border-[#d7d7d7]" />
    <span className="flex w-[170px] items-center gap-1 border-l border-[#d7d7d7] pl-1">
      <ComputerIcon className="h-[15px] w-[15px]" />
      Datamaskin
      <svg viewBox="0 0 8 8" className="mt-auto mr-0.5 mb-0.5 ml-auto h-2 w-2 fill-[#b3b3b3]" aria-hidden="true">
        <path d="M6 0h2v2H6zM3 3h2v2H3zm3 0h2v2H6zM0 6h2v2H0zm3 0h2v2H3zm3 0h2v2H6z" />
      </svg>
    </span>
  </footer>
);

/* ---------- context menu and callout ---------- */

type MenuEntry =
  | "separator"
  | {
      label: string;
      sub?: boolean;
      shortcut?: string;
      active?: boolean;
      disabled?: boolean;
      icon?: React.ReactNode;
    };

const menu: MenuEntry[] = [
  { label: "Vis", sub: true },
  { label: "Sorter etter", sub: true },
  { label: "Grupper etter", sub: true },
  { label: "Oppdater" },
  "separator",
  { label: "Tilpass denne mappen..." },
  "separator",
  { label: "Lim inn", active: true },
  { label: "Lim inn snarvei", disabled: true },
  { label: "Angre sletting", shortcut: "Ctrl+Z" },
  "separator",
  {
    label: "Flytt til Dropbox",
    icon: (
      <Svg16 className="h-3 w-3">
        <DropboxShape fill="#8fc4ee" stroke="#2b6ea8" />
      </Svg16>
    ),
  },
  "separator",
  { label: "Del med", sub: true },
  "separator",
  { label: "Ny", sub: true },
  "separator",
  { label: "Egenskaper" },
];

const ContextMenu = () => (
  <div className="absolute top-[477px] left-[662px] flex h-[289px] w-[234px] flex-col border border-[#979797] bg-[#f0f0f0] px-0.5 pt-0.5 pb-1 shadow-[2px_2px_2px_rgba(0,0,0,0.5)]">
    <span className="absolute inset-y-0.5 left-[27px] w-px bg-[#e0e0e0]" />
    {menu.map((entry, i) =>
      entry === "separator" ? (
        <hr key={i} className="my-[3px] ml-7 border-[#d7d7d7]" />
      ) : (
        <button
          key={i}
          type="button"
          disabled={entry.disabled}
          className={`relative flex min-h-0 flex-1 items-center border pr-2 ${
            entry.active ? "border-[#7cb0e2] bg-[#d1e2f2]" : "border-transparent"
          } ${entry.disabled ? "text-[#7f7f7f]" : "text-black"}`}
        >
          <span className="w-[29px] shrink-0 pl-0.5">{entry.icon}</span>
          {entry.label}
          {entry.shortcut && <span className="mr-2 ml-auto">{entry.shortcut}</span>}
          {entry.sub && (
            <svg viewBox="0 0 4 7" className="ml-auto h-[7px] w-1" aria-hidden="true">
              <path d="M0 0l4 3.500L0 7z" fill="#111" />
            </svg>
          )}
        </button>
      )
    )}
  </div>
);

const Callout = () => (
  <div className="absolute top-[489px] left-[204px] h-[125px] w-[425px]">
    <svg viewBox="0 0 425 125" className="absolute inset-0 h-full w-full overflow-visible drop-shadow-[1px_3px_2px_rgba(0,0,0,0.55)]" aria-hidden="true">
      <path d="M12 2H287Q296 2 296 11L294 71.500 421 116.500 250 83H13Q5 83 4.500 74L2 11Q2 2 12 2z" fill="#fd4144" />
    </svg>
    <p className="relative w-[296px] pt-[22px] text-center font-['Liberation_Sans',sans-serif] text-[17px] leading-5 text-white">
      Lim inn filer til opprettet
      <br />
      kontroll mappe
    </p>
  </div>
);

export default function App() {
  return (
    <div className="relative flex h-screen flex-col overflow-hidden border border-[#b5506f] bg-[#e8668f] px-[5px] pb-[5px] font-['Open_Sans','Noto_Sans',sans-serif] text-[11px]">
      <Gradients />
      <TitleBar />
      <div className="flex min-h-0 flex-1 flex-col border border-[#cb5a7e] bg-white">
        <Tabs />
        <Ribbon />
        <AddressBar />
        <Toolbar />
        <main className="flex min-h-0 flex-1">
          <NavigationPane />
          <FileList />
        </main>
        <DetailsBar />
        <StatusBar />
      </div>
      <Callout />
      <ContextMenu />
    </div>
  );
}
